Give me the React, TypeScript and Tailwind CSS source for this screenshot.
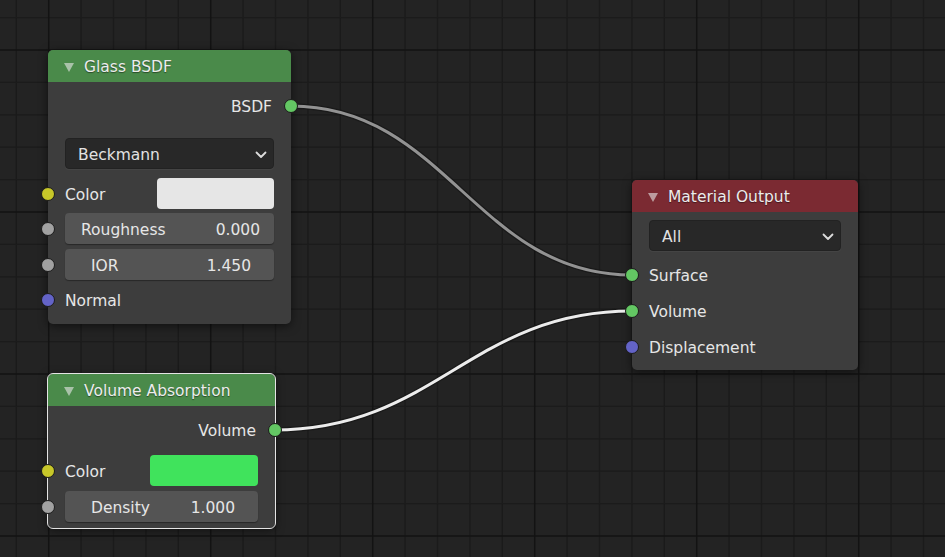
import React from "react";

const SOCKET_GREEN = "bg-[#63c763]";
const SOCKET_YELLOW = "bg-[#c7c729]";
const SOCKET_GRAY = "bg-[#a1a1a1]";
const SOCKET_BLUE = "bg-[#6363c7]";

const TEXT = "pt-[4px] text-[15.5px] text-[#e6e6e6]";

const Socket = ({ color, side }: { color: string; side: "left" | "right" }) => (
  <span
    className={`absolute top-1/2 -translate-y-1/2 w-[14px] h-[14px] rounded-full border border-[#1b1b1b] ${
      side === "left" ? "left-[-7px]" : "right-[-7px]"
    } ${color}`}
  />
);

const Header = ({ title, color }: { title: string; color: string }) => (
  <div className={`h-[32px] flex items-center rounded-t-[5px] ${color}`}>
    <svg width="10" height="9" viewBox="0 0 10 9" className="ml-[16px] mr-[10px] mt-[2px] opacity-60">
      <polygon points="0,0 10,0 5,9" fill="#e8e8e8" />
    </svg>
    <span className="pt-[4px] text-[15.5px] text-[#ececec] [text-shadow:0_1px_1px_rgba(0,0,0,0.45)]">{title}</span>
  </div>
);

const Dropdown = ({ value }: { value: string }) => (
  <div className="h-[31px] flex items-center justify-between rounded-[4px] bg-[#282828] border border-[#222] pl-[12px] pr-[6px] shadow-[0_1px_0_rgba(255,255,255,0.04)]">
    <span className="pt-[4px] text-[15.5px] text-[#e2e2e2]">{value}</span>
    <svg width="12" height="8" viewBox="0 0 12 8" className="mt-[2px]">
      <path d="M1.5 1.5 L6 6 L10.5 1.5" fill="none" stroke="#dcdcdc" strokeWidth="1.8" strokeLinecap="round" strokeLinejoin="round" />
    </svg>
  </div>
);

const NumberField = ({ label, value, pl, pr }: { label: string; value: string; pl: string; pr: string }) => (
  <div className={`h-[31px] flex items-center justify-between rounded-[4px] bg-[#545454] shadow-[0_1px_1px_rgba(0,0,0,0.35)] ${pl} ${pr}`}>
    <span className={TEXT}>{label}</span>
    <span className={TEXT}>{value}</span>
  </div>
);

const OutputRow = ({ label, className }: { label: string; className: string }) => (
  <div className={`relative h-[30px] flex items-center justify-end pr-[19px] ${className}`}>
    <span className={TEXT}>{label}</span>
    <Socket color={SOCKET_GREEN} side="right" />
  </div>
);

const InputRow = ({ socket, className, children }: { socket: string; className: string; children: React.ReactNode }) => (
  <div className={`relative px-[17px] ${className}`}>
    <Socket color={socket} side="left" />
    {children}
  </div>
);

const Label = ({ text }: { text: string }) => (
  <div className="h-[30px] flex items-center">
    <span className={TEXT}>{text}</span>
  </div>
);

const ColorRow = ({ swatch, width }: { swatch: string; width: string }) => (
  <div className="h-[31px] flex items-center justify-between">
    <span className={TEXT}>Color</span>
    <span className={`h-full rounded-[4px] ${width} ${swatch}`} />
  </div>
);

const xs = Array.from({ length: 30 }, (_, k) => ({ v: 16.3 + 32.4 * k, major: k % 5 === 1 }));
const ys = Array.from({ length: 18 }, (_, k) => ({ v: 17.6 + 32.4 * k, major: k % 5 === 1 }));

const WIRE_A = "M291 106 C446 106, 477 275, 632 275";
const WIRE_B = "M274 430 C435 430, 471 311, 632 311";

export default function App() {
  return (
    <div className="relative w-[945px] h-[557px] overflow-hidden bg-[#232323] font-['DejaVu_Sans',sans-serif]">
      <svg className="absolute inset-0" width="945" height="557">
        {xs.filter((l) => !l.major).map((l) => (
          <line key={`vx${l.v}`} x1={l.v} y1={0} x2={l.v} y2={557} stroke="#1b1b1b" strokeWidth="1.3" />
        ))}
        {ys.filter((l) => !l.major).map((l) => (
          <line key={`hy${l.v}`} x1={0} y1={l.v} x2={945} y2={l.v} stroke="#1b1b1b" strokeWidth="1.3" />
        ))}
        {xs.filter((l) => l.major).map((l) => (
          <line key={`mx${l.v}`} x1={l.v} y1={0} x2={l.v} y2={557} stroke="#131313" strokeWidth="1.5" />
        ))}
        {ys.filter((l) => l.major).map((l) => (
          <line key={`my${l.v}`} x1={0} y1={l.v} x2={945} y2={l.v} stroke="#131313" strokeWidth="1.5" />
        ))}

        {/* wires */}
        <path d={WIRE_A} fill="none" stroke="#161616" strokeOpacity="0.7" strokeWidth="5.5" />
        <path d={WIRE_A} fill="none" stroke="#929292" strokeWidth="3" />
        <path d={WIRE_B} fill="none" stroke="#161616" strokeOpacity="0.7" strokeWidth="5.5" />
        <path d={WIRE_B} fill="none" stroke="#ececec" strokeWidth="3" />
      </svg>

      {/* Glass BSDF */}
      <div className="absolute left-[48px] top-[50px] w-[243px] h-[274px] rounded-[5px] bg-[#3d3d3d] shadow-[0_2px_10px_rgba(0,0,0,0.55)] flex flex-col">
        <Header title="Glass BSDF" color="bg-[#4a8a4a]" />
        <OutputRow label="BSDF" className="mt-[9px]" />
        <div className="px-[17px] mt-[17px]">
          <Dropdown value="Beckmann" />
        </div>
        <InputRow socket={SOCKET_YELLOW} className="mt-[9px]">
          <ColorRow swatch="bg-[#e6e6e6]" width="w-[117px]" />
        </InputRow>
        <InputRow socket={SOCKET_GRAY} className="mt-[4px]">
          <NumberField label="Roughness" value="0.000" pl="pl-[16px]" pr="pr-[14px]" />
        </InputRow>
        <InputRow socket={SOCKET_GRAY} className="mt-[5px]">
          <NumberField label="IOR" value="1.450" pl="pl-[26px]" pr="pr-[23px]" />
        </InputRow>
        <InputRow socket={SOCKET_BLUE} className="mt-[5px]">
          <Label text="Normal" />
        </InputRow>
      </div>

      {/* Volume Absorption (selected) */}
      <div className="absolute left-[48px] top-[374px] w-[227px] h-[154px] rounded-[5px] bg-[#3d3d3d] outline outline-[#e4e4e4] shadow-[0_2px_10px_rgba(0,0,0,0.55)] flex flex-col">
        <Header title="Volume Absorption" color="bg-[#4a8a4a]" />
        <OutputRow label="Volume" className="mt-[9px]" />
        <InputRow socket={SOCKET_YELLOW} className="mt-[10px]">
          <ColorRow swatch="bg-[#40e35c]" width="w-[108px]" />
        </InputRow>
        <InputRow socket={SOCKET_GRAY} className="mt-[5px]">
          <NumberField label="Density" value="1.000" pl="pl-[26px]" pr="pr-[23px]" />
        </InputRow>
      </div>

      {/* Material Output */}
      <div className="absolute left-[632px] top-[180px] w-[226px] h-[190px] rounded-[5px] bg-[#3d3d3d] shadow-[0_2px_10px_rgba(0,0,0,0.55)] flex flex-col">
        <Header title="Material Output" color="bg-[#7b2a32]" />
        <div className="px-[17px] mt-[8px]">
          <Dropdown value="All" />
        </div>
        <InputRow socket={SOCKET_GREEN} className="mt-[9px]">
          <Label text="Surface" />
        </InputRow>
        <InputRow socket={SOCKET_GREEN} className="mt-[6px]">
          <Label text="Volume" />
        </InputRow>
        <InputRow socket={SOCKET_BLUE} className="mt-[6px]">
          <Label text="Displacement" />
        </InputRow>
      </div>
    </div>
  );
}
